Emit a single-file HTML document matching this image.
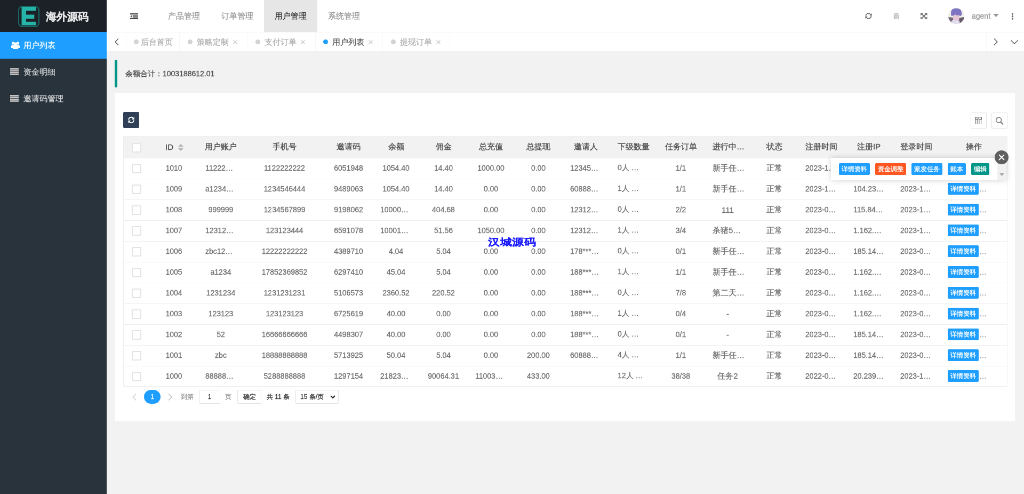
<!DOCTYPE html>
<html><head><meta charset="utf-8">
<style>
html,body{margin:0;padding:0;width:1024px;height:494px;overflow:hidden;background:#f2f2f2}
*{box-sizing:border-box}
#s{position:absolute;left:0;top:0;width:1920px;height:926px;transform:scale(0.533333);will-change:transform;transform-origin:0 0;font-family:"Liberation Sans",sans-serif;font-size:14px;color:#666;background:#f2f2f2;overflow:hidden;-webkit-text-stroke-width:0.3px}
.a{position:absolute}
/* side */
#side{left:0;top:0;width:200px;height:926px;background:#29333c}
#logo{left:0;top:0;width:200px;height:60px;background:#1c2128}
#logoic{left:34px;top:10.7px;width:40px;height:40px;border:2px solid #176a63;border-radius:8px;background:#1c2128}
#logotx{left:86px;top:17px;font-size:20px;font-weight:bold;color:#e6e6e6;line-height:28px;white-space:nowrap}
.mi{left:0;width:200px;height:50px;line-height:50px;font-size:15px;color:rgba(255,255,255,.7);white-space:nowrap}
.mi span{position:absolute;left:44px;top:0}
.mi.on{background:#1e9fff;color:#fff}
/* header */
#hdr{left:200px;top:0;width:1720px;height:60px;background:#fff}
.nv{top:0;height:60px;line-height:60px;font-size:15px;color:#999;white-space:nowrap;text-align:center;width:100px}
.nv.on{background:#e6e6e6;color:#333}
#tabs{left:200px;top:60px;width:1720px;height:36px;background:#fff;border-top:1px solid #f6f6f6}
.dv{top:0;width:1px;height:35px;background:#f6f6f6}
.tb{top:0;height:35px;line-height:35px;font-size:15px;white-space:nowrap;color:#b0b0b0}
.dot{position:absolute;top:13px;width:9px;height:9px;border-radius:50%;background:#d2d2d2}
.x{position:absolute;top:0;color:#c8c8c8;font-size:13px;-webkit-text-stroke-width:0}
/* body */
#quote{left:215px;top:112px;width:5px;height:52px;background:#009688;border-radius:3px}
#qtx{left:235px;top:127px;color:#4a4a4a;line-height:22px;white-space:nowrap}
#card{left:215px;top:174px;width:1688px;height:616px;background:#fff;border-radius:2px}
.ib{width:30px;height:30px;border:1px solid #e2e2e2;border-radius:2px;background:#fff}
#tbl{left:231px;top:254.5px;width:1658px;height:470px;border:1px solid #eee;background:#fff}
.thead{position:absolute;left:0;top:0;width:100%;height:40px;background:#f2f2f2}
.tr{position:absolute;left:0;width:100%;height:39px;border-top:1px solid #eee}
.c{position:absolute;padding:0 15px;display:flex;align-items:center;justify-content:center;white-space:nowrap;overflow:hidden}
.c span{display:block;white-space:nowrap}
.td .c{color:#707070}
.th .c{font-size:15px;color:#505050;-webkit-text-stroke-width:0.4px}
.cb{position:absolute;width:18px;height:18px;border:2px solid #e4e4e4;border-radius:2px;background:#fff}
.sort{display:inline-block;position:relative;width:10px;height:14px;margin-left:9px;vertical-align:middle}
.sort:before{content:"";position:absolute;left:0;top:0;border:5px solid transparent;border-bottom:5px solid #b2b2b2;border-top:0}
.sort:after{content:"";position:absolute;left:0;top:8px;border:5px solid transparent;border-top:5px solid #b2b2b2;border-bottom:0}
.op{justify-content:flex-start}
.el{display:inline-block;line-height:22px;color:#999;margin-left:1px}
.bx{display:inline-block;height:22px;line-height:22px;padding:0 5px;font-size:12px;color:#fff;background:#1e9fff;border-radius:2px}
/* pager */
.pg{top:731px;height:26px;line-height:26px;white-space:nowrap;font-size:12px;color:#999}
</style></head><body>
<div id="s">
 <div class="a" id="side">
  <div class="a" id="logo"></div>
  <div class="a" id="logoic"><svg width="40" height="40" viewBox="0 0 40 40" style="position:absolute;left:-2px;top:-2px"><path d="M6.5 2 H33.5 V9 H15 V16.5 H30.3 V24 H15 V29.7 H33.5 V36.6 H6.5 Z" fill="#24b4a8"/></svg></div>
  <div class="a" id="logotx">海外源码</div>
  <div class="a mi on" style="top:60px"><svg class="a" style="left:20.5px;top:18.4px" width="16" height="14" viewBox="0 0 16 14"><circle cx="3.6" cy="3" r="2.7" fill="#fff"/><circle cx="12.4" cy="3" r="2.7" fill="#fff"/><circle cx="8" cy="4.6" r="3" fill="#fff"/><path d="M0 12 V8.5 Q0 6.2 2.5 6.2 H13.5 Q16 6.2 16 8.5 V12 H13 V14 H3 V12Z" fill="#fff"/></svg><span>用户列表</span></div>
  <div class="a mi" style="top:110px"><svg class="a" style="left:19px;top:18.4px" width="16" height="13" viewBox="0 0 16 13"><rect x="0" y="0" width="16" height="2.6" fill="#c4c4c4"/><rect x="0" y="3.4" width="16" height="2.6" fill="#c4c4c4"/><rect x="0" y="6.8" width="16" height="2.6" fill="#c4c4c4"/><rect x="0" y="10.2" width="16" height="2.6" fill="#c4c4c4"/></svg><span>资金明细</span></div>
  <div class="a mi" style="top:160px"><svg class="a" style="left:19px;top:18.4px" width="16" height="13" viewBox="0 0 16 13"><rect x="0" y="0" width="16" height="2.6" fill="#c4c4c4"/><rect x="0" y="3.4" width="16" height="2.6" fill="#c4c4c4"/><rect x="0" y="6.8" width="16" height="2.6" fill="#c4c4c4"/><rect x="0" y="10.2" width="16" height="2.6" fill="#c4c4c4"/></svg><span>邀请码管理</span></div>
 </div>

 <div class="a" id="hdr">
  <svg class="a" style="left:43.5px;top:24.5px" width="15" height="11" viewBox="0 0 15 11"><rect x="0" y="0" width="15" height="2.2" fill="#444"/><rect x="0" y="8.8" width="15" height="2.2" fill="#444"/><rect x="4.8" y="3.2" width="10.2" height="1.4" fill="#555"/><rect x="4.8" y="4.9" width="10.2" height="1.2" fill="#777"/><rect x="4.8" y="6.4" width="10.2" height="1.4" fill="#555"/><path d="M0.3 5.5 L3.3 3.3 V7.7Z" fill="#555"/></svg>
  <div class="a nv" style="left:95px">产品管理</div>
  <div class="a nv" style="left:195px">订单管理</div>
  <div class="a nv on" style="left:295px">用户管理</div>
  <div class="a nv" style="left:395px">系统管理</div>
  <!-- right icons -->
  <svg class="a" style="left:1421.5px;top:23.8px" width="13" height="12" viewBox="0 0 13 12"><path d="M1.3 6.3 C1.6 3.3 3.8 1.3 6.6 1.3 C8.2 1.3 9.6 2 10.6 3.2" stroke="#666" stroke-width="1.6" fill="none"/><path d="M12.6 1 V5.3 H8.3Z" fill="#666"/><path d="M11.7 5.7 C11.4 8.7 9.2 10.7 6.4 10.7 C4.8 10.7 3.4 10 2.4 8.8" stroke="#666" stroke-width="1.6" fill="none"/><path d="M0.4 11 V6.7 H4.7Z" fill="#666"/></svg>
  <svg class="a" style="left:1474.5px;top:23.8px" width="11" height="12.5" viewBox="0 0 11 12.5"><path d="M0.3 3.2 Q0.8 0.3 5.5 0.3 Q10.2 0.3 10.7 3.2Z" fill="#c2c2c2"/><rect x="0.8" y="3.8" width="9.4" height="8.7" rx="1" fill="#c2c2c2"/><path d="M3.4 5 V11.5 M5.5 5 V11.5 M7.6 5 V11.5" stroke="#e6e6e6" stroke-width="0.8"/></svg>
  <svg class="a" style="left:1526px;top:23.8px" width="12.5" height="12.5" viewBox="0 0 12.5 12.5"><path d="M2 2 L10.5 10.5 M10.5 2 L2 10.5" stroke="#777" stroke-width="2"/><path d="M0 0 H5.5 L0 5.5Z M12.5 0 V5.5 L7 0Z M0 12.5 V7 L5.5 12.5Z M12.5 12.5 H7 L12.5 7Z" fill="#777"/></svg>
  <div class="a" style="left:1578px;top:15px;width:30px;height:30px;border-radius:50%;overflow:hidden;background:#e9dfe6">
   <svg width="30" height="30" viewBox="0 0 30 30"><rect width="30" height="30" fill="#eef0ea"/><path d="M0 17 L10 18 L12 26 L4 30 L0 30Z" fill="#75697a"/><path d="M17 19 L30 17 L30 30 L20 30Z" fill="#685d6a"/><path d="M6 24 Q13 20 21 24 L22 30 L6 30Z" fill="#e2dcf0"/><path d="M9 13 Q14 11 21 13 L20.5 22 Q15 25 9 22Z" fill="#e6c6d4"/><path d="M5 11 Q4.5 0.5 15 0.6 Q25.5 0.5 25.4 11 Q25 15 22 15 Q19 12 16 14 L13 12 Q10 15 6.5 15 Q5 14 5 11Z" fill="#7d74c2"/></svg>
  </div>
  <div class="a" style="left:1622px;top:19px;line-height:22px;color:#999;font-size:14px">agent</div>
  <svg class="a" style="left:1662px;top:26px" width="11" height="6" viewBox="0 0 11 6"><path d="M0 0 H11 L5.5 6Z" fill="#999"/></svg>
  <svg class="a" style="left:1696px;top:23.5px" width="5" height="13" viewBox="0 0 5 13"><circle cx="2.5" cy="2" r="1.7" fill="#666"/><circle cx="2.5" cy="6.5" r="1.7" fill="#666"/><circle cx="2.5" cy="11" r="1.7" fill="#666"/></svg>
 </div>

 <div class="a" id="tabs">
  <svg class="a" style="left:15px;top:11px" width="8" height="13" viewBox="0 0 8 13"><path d="M7 0.5 L1 6.5 L7 12.5" stroke="#555" stroke-width="1.4" fill="none"/></svg>
  <div class="a dv" style="left:36px"></div>
  <div class="a tb" style="left:36px;width:100px"><i class="dot" style="left:15px"></i><span class="a" style="left:28px">后台首页</span></div>
  <div class="a dv" style="left:136px"></div>
  <div class="a tb" style="left:137px;width:126px"><i class="dot" style="left:15px"></i><span class="a" style="left:32px">策略定制</span><svg class="a" style="left:100px;top:14px" width="8" height="8" viewBox="0 0 8 8"><path d="M0.5 0.5 L7.5 7.5 M7.5 0.5 L0.5 7.5" stroke="#c4c4c4" stroke-width="1.2"/></svg></div>
  <div class="a dv" style="left:263px"></div>
  <div class="a tb" style="left:264px;width:127px"><i class="dot" style="left:15px"></i><span class="a" style="left:32px">支付订单</span><svg class="a" style="left:100px;top:14px" width="8" height="8" viewBox="0 0 8 8"><path d="M0.5 0.5 L7.5 7.5 M7.5 0.5 L0.5 7.5" stroke="#c4c4c4" stroke-width="1.2"/></svg></div>
  <div class="a dv" style="left:391px"></div>
  <div class="a tb" style="left:392px;width:125px;color:#5a5a5a"><i class="dot" style="left:14px;background:#1e9fff"></i><span class="a" style="left:31px">用户列表</span><svg class="a" style="left:99px;top:14px" width="8" height="8" viewBox="0 0 8 8"><path d="M0.5 0.5 L7.5 7.5 M7.5 0.5 L0.5 7.5" stroke="#c4c4c4" stroke-width="1.2"/></svg></div>
  <div class="a dv" style="left:517px"></div>
  <div class="a tb" style="left:518px;width:125px"><i class="dot" style="left:15px"></i><span class="a" style="left:32px">提现订单</span><svg class="a" style="left:100px;top:14px" width="8" height="8" viewBox="0 0 8 8"><path d="M0.5 0.5 L7.5 7.5 M7.5 0.5 L0.5 7.5" stroke="#c4c4c4" stroke-width="1.2"/></svg></div>
  <div class="a dv" style="left:643px"></div>
  <div class="a dv" style="left:1649px"></div>
  <svg class="a" style="left:1663px;top:11px" width="8" height="13" viewBox="0 0 8 13"><path d="M1 0.5 L7 6.5 L1 12.5" stroke="#555" stroke-width="1.4" fill="none"/></svg>
  <div class="a dv" style="left:1684px"></div>
  <svg class="a" style="left:1695px;top:14px" width="14" height="8" viewBox="0 0 14 8"><path d="M0.5 0.5 L7 7 L13.5 0.5" stroke="#555" stroke-width="1.4" fill="none"/></svg>
 </div>

 <div class="a" id="quote"></div>
 <div class="a" id="qtx">余额合计：1003188612.01</div>

 <div class="a" id="card"></div>
 <div class="a" style="left:231px;top:210px;width:30px;height:30px;background:#2f4056;border-radius:2px"><svg class="a" style="left:8px;top:8px" width="14" height="14" viewBox="0 0 16 14"><path d="M2.5 6.5 A5.5 5.5 0 0 1 12.5 3.5" stroke="#fff" stroke-width="2.2" fill="none"/><path d="M14.5 0.5 V6 H9Z" fill="#fff"/><path d="M13.5 7.5 A5.5 5.5 0 0 1 3.5 10.5" stroke="#fff" stroke-width="2.2" fill="none"/><path d="M1.5 13.5 V8 H7Z" fill="#fff"/></svg></div>
 <div class="a ib" style="left:1820px;top:210.5px"><svg class="a" style="left:7px;top:7.5px" width="13" height="13" viewBox="0 0 13 13"><rect x="0.7" y="0.7" width="4.9" height="4.6" rx="0.6" stroke="#666" stroke-width="1.3" fill="none"/><rect x="7.4" y="0.7" width="4.9" height="4.6" rx="0.6" stroke="#666" stroke-width="1.3" fill="none"/><path d="M2.2 1.8 L3.1 3.5 L4 1.8Z M8.9 1.8 L9.8 3.5 L10.7 1.8Z" fill="#888"/><path d="M1.2 6 V13 M4.3 6 V13 M7.9 6 V13 M11.6 6 V13" stroke="#777" stroke-width="1.2"/></svg></div>
 <div class="a ib" style="left:1859px;top:210.5px"><svg class="a" style="left:5px;top:5px" width="20" height="20" viewBox="0 0 20 20"><circle cx="7.6" cy="8" r="5" stroke="#777" stroke-width="1.5" fill="none"/><path d="M3 8 A4.6 4.6 0 0 1 6 3.6" stroke="#999" stroke-width="2.2" fill="none"/><path d="M11.4 11.8 L15.2 15.6" stroke="#777" stroke-width="2.2" stroke-linecap="round"/></svg></div>

 <div class="a" id="tbl"><div class="thead"></div><div class="cb" style="left:15px;top:12px"></div><div class="th"><div class="c" style="left:50px;top:0px;width:88px;height:40px"><span><b style="font-weight:normal;position:relative;left:1px">ID<i class="sort"></i></b></span></div><div class="c" style="left:138px;top:0px;width:88px;height:40px"><span>用户账户</span></div><div class="c" style="left:226px;top:0px;width:151px;height:40px"><span>手机号</span></div><div class="c" style="left:377px;top:0px;width:89px;height:40px"><span>邀请码</span></div><div class="c" style="left:466px;top:0px;width:89px;height:40px"><span>余额</span></div><div class="c" style="left:555px;top:0px;width:89px;height:40px"><span>佣金</span></div><div class="c" style="left:644px;top:0px;width:89px;height:40px"><span>总充值</span></div><div class="c" style="left:733px;top:0px;width:89px;height:40px"><span>总提现</span></div><div class="c" style="left:822px;top:0px;width:89px;height:40px"><span>邀请人</span></div><div class="c" style="left:911px;top:0px;width:89px;height:40px"><span>下级数量</span></div><div class="c" style="left:1000px;top:0px;width:89px;height:40px"><span>任务订单</span></div><div class="c" style="left:1089px;top:0px;width:87px;height:40px;justify-content:flex-start"><span>进行中…</span></div><div class="c" style="left:1176px;top:0px;width:87px;height:40px"><span>状态</span></div><div class="c" style="left:1263px;top:0px;width:90px;height:40px"><span>注册时间</span></div><div class="c" style="left:1353px;top:0px;width:88px;height:40px"><span>注册IP</span></div><div class="c" style="left:1441px;top:0px;width:89px;height:40px"><span>登录时间</span></div><div class="c" style="left:1530px;top:0px;width:128px;height:40px"><span>操作</span></div></div><div class="tr" style="top:40px"></div><div class="cb" style="left:15px;top:51px"></div><div class="td"><div class="c" style="left:50px;top:40px;width:88px;height:39px"><span>1010</span></div><div class="c" style="left:138px;top:40px;width:88px;height:39px;justify-content:flex-start"><span>11222…</span></div><div class="c" style="left:226px;top:40px;width:151px;height:39px"><span>1122222222</span></div><div class="c" style="left:377px;top:40px;width:89px;height:39px"><span>6051948</span></div><div class="c" style="left:466px;top:40px;width:89px;height:39px"><span>1054.40</span></div><div class="c" style="left:555px;top:40px;width:89px;height:39px"><span>14.40</span></div><div class="c" style="left:644px;top:40px;width:89px;height:39px"><span>1000.00</span></div><div class="c" style="left:733px;top:40px;width:89px;height:39px"><span>0.00</span></div><div class="c" style="left:822px;top:40px;width:89px;height:39px;justify-content:flex-start"><span>12345…</span></div><div class="c" style="left:911px;top:40px;width:89px;height:39px;justify-content:flex-start"><span>0人 …</span></div><div class="c" style="left:1000px;top:40px;width:89px;height:39px"><span>1/1</span></div><div class="c" style="left:1089px;top:40px;width:87px;height:39px;justify-content:flex-start;font-size:15px"><span>新手任…</span></div><div class="c" style="left:1176px;top:40px;width:87px;height:39px;font-size:15px"><span>正常</span></div><div class="c" style="left:1263px;top:40px;width:90px;height:39px;justify-content:flex-start"><span>2023-1…</span></div><div class="c" style="left:1353px;top:40px;width:88px;height:39px"><span></span></div><div class="c" style="left:1441px;top:40px;width:89px;height:39px"><span></span></div></div><div class="tr" style="top:79px"></div><div class="cb" style="left:15px;top:90px"></div><div class="td"><div class="c" style="left:50px;top:79px;width:88px;height:39px"><span>1009</span></div><div class="c" style="left:138px;top:79px;width:88px;height:39px;justify-content:flex-start"><span>a1234…</span></div><div class="c" style="left:226px;top:79px;width:151px;height:39px"><span>1234546444</span></div><div class="c" style="left:377px;top:79px;width:89px;height:39px"><span>9489063</span></div><div class="c" style="left:466px;top:79px;width:89px;height:39px"><span>1054.40</span></div><div class="c" style="left:555px;top:79px;width:89px;height:39px"><span>14.40</span></div><div class="c" style="left:644px;top:79px;width:89px;height:39px"><span>0.00</span></div><div class="c" style="left:733px;top:79px;width:89px;height:39px"><span>0.00</span></div><div class="c" style="left:822px;top:79px;width:89px;height:39px;justify-content:flex-start"><span>60888…</span></div><div class="c" style="left:911px;top:79px;width:89px;height:39px;justify-content:flex-start"><span>1人 …</span></div><div class="c" style="left:1000px;top:79px;width:89px;height:39px"><span>1/1</span></div><div class="c" style="left:1089px;top:79px;width:87px;height:39px;justify-content:flex-start;font-size:15px"><span>新手任…</span></div><div class="c" style="left:1176px;top:79px;width:87px;height:39px;font-size:15px"><span>正常</span></div><div class="c" style="left:1263px;top:79px;width:90px;height:39px;justify-content:flex-start"><span>2023-1…</span></div><div class="c" style="left:1353px;top:79px;width:88px;height:39px;justify-content:flex-start"><span>104.23…</span></div><div class="c" style="left:1441px;top:79px;width:89px;height:39px;justify-content:flex-start"><span>2023-1…</span></div><div class="c op" style="left:1530px;top:79px;width:128px;height:39px"><span class="bx">详情资料</span><span class="el">…</span></div></div><div class="tr" style="top:118px"></div><div class="cb" style="left:15px;top:129px"></div><div class="td"><div class="c" style="left:50px;top:118px;width:88px;height:39px"><span>1008</span></div><div class="c" style="left:138px;top:118px;width:88px;height:39px"><span>999999</span></div><div class="c" style="left:226px;top:118px;width:151px;height:39px"><span>1234567899</span></div><div class="c" style="left:377px;top:118px;width:89px;height:39px"><span>9198062</span></div><div class="c" style="left:466px;top:118px;width:89px;height:39px;justify-content:flex-start"><span>10000…</span></div><div class="c" style="left:555px;top:118px;width:89px;height:39px"><span>404.68</span></div><div class="c" style="left:644px;top:118px;width:89px;height:39px"><span>0.00</span></div><div class="c" style="left:733px;top:118px;width:89px;height:39px"><span>0.00</span></div><div class="c" style="left:822px;top:118px;width:89px;height:39px;justify-content:flex-start"><span>12312…</span></div><div class="c" style="left:911px;top:118px;width:89px;height:39px;justify-content:flex-start"><span>0人 …</span></div><div class="c" style="left:1000px;top:118px;width:89px;height:39px"><span>2/2</span></div><div class="c" style="left:1089px;top:118px;width:87px;height:39px;font-size:15px"><span>111</span></div><div class="c" style="left:1176px;top:118px;width:87px;height:39px;font-size:15px"><span>正常</span></div><div class="c" style="left:1263px;top:118px;width:90px;height:39px;justify-content:flex-start"><span>2023-0…</span></div><div class="c" style="left:1353px;top:118px;width:88px;height:39px;justify-content:flex-start"><span>115.84…</span></div><div class="c" style="left:1441px;top:118px;width:89px;height:39px;justify-content:flex-start"><span>2023-1…</span></div><div class="c op" style="left:1530px;top:118px;width:128px;height:39px"><span class="bx">详情资料</span><span class="el">…</span></div></div><div class="tr" style="top:157px"></div><div class="cb" style="left:15px;top:168px"></div><div class="td"><div class="c" style="left:50px;top:157px;width:88px;height:39px"><span>1007</span></div><div class="c" style="left:138px;top:157px;width:88px;height:39px;justify-content:flex-start"><span>12312…</span></div><div class="c" style="left:226px;top:157px;width:151px;height:39px"><span>123123444</span></div><div class="c" style="left:377px;top:157px;width:89px;height:39px"><span>6591078</span></div><div class="c" style="left:466px;top:157px;width:89px;height:39px;justify-content:flex-start"><span>10001…</span></div><div class="c" style="left:555px;top:157px;width:89px;height:39px"><span>51.56</span></div><div class="c" style="left:644px;top:157px;width:89px;height:39px"><span>1050.00</span></div><div class="c" style="left:733px;top:157px;width:89px;height:39px"><span>0.00</span></div><div class="c" style="left:822px;top:157px;width:89px;height:39px;justify-content:flex-start"><span>12312…</span></div><div class="c" style="left:911px;top:157px;width:89px;height:39px;justify-content:flex-start"><span>1人 …</span></div><div class="c" style="left:1000px;top:157px;width:89px;height:39px"><span>3/4</span></div><div class="c" style="left:1089px;top:157px;width:87px;height:39px;justify-content:flex-start;font-size:15px"><span>杀猪5…</span></div><div class="c" style="left:1176px;top:157px;width:87px;height:39px;font-size:15px"><span>正常</span></div><div class="c" style="left:1263px;top:157px;width:90px;height:39px;justify-content:flex-start"><span>2023-0…</span></div><div class="c" style="left:1353px;top:157px;width:88px;height:39px;justify-content:flex-start"><span>1.162.…</span></div><div class="c" style="left:1441px;top:157px;width:89px;height:39px;justify-content:flex-start"><span>2023-1…</span></div><div class="c op" style="left:1530px;top:157px;width:128px;height:39px"><span class="bx">详情资料</span><span class="el">…</span></div></div><div class="tr" style="top:196px"></div><div class="cb" style="left:15px;top:207px"></div><div class="td"><div class="c" style="left:50px;top:196px;width:88px;height:39px"><span>1006</span></div><div class="c" style="left:138px;top:196px;width:88px;height:39px;justify-content:flex-start"><span>zbc12…</span></div><div class="c" style="left:226px;top:196px;width:151px;height:39px"><span>12222222222</span></div><div class="c" style="left:377px;top:196px;width:89px;height:39px"><span>4389710</span></div><div class="c" style="left:466px;top:196px;width:89px;height:39px"><span>4.04</span></div><div class="c" style="left:555px;top:196px;width:89px;height:39px"><span>5.04</span></div><div class="c" style="left:644px;top:196px;width:89px;height:39px"><span>0.00</span></div><div class="c" style="left:733px;top:196px;width:89px;height:39px"><span>0.00</span></div><div class="c" style="left:822px;top:196px;width:89px;height:39px;justify-content:flex-start"><span>178***…</span></div><div class="c" style="left:911px;top:196px;width:89px;height:39px;justify-content:flex-start"><span>0人 …</span></div><div class="c" style="left:1000px;top:196px;width:89px;height:39px"><span>0/1</span></div><div class="c" style="left:1089px;top:196px;width:87px;height:39px;justify-content:flex-start;font-size:15px"><span>新手任…</span></div><div class="c" style="left:1176px;top:196px;width:87px;height:39px;font-size:15px"><span>正常</span></div><div class="c" style="left:1263px;top:196px;width:90px;height:39px;justify-content:flex-start"><span>2023-0…</span></div><div class="c" style="left:1353px;top:196px;width:88px;height:39px;justify-content:flex-start"><span>185.14…</span></div><div class="c" style="left:1441px;top:196px;width:89px;height:39px;justify-content:flex-start"><span>2023-0…</span></div><div class="c op" style="left:1530px;top:196px;width:128px;height:39px"><span class="bx">详情资料</span><span class="el">…</span></div></div><div class="tr" style="top:235px"></div><div class="cb" style="left:15px;top:246px"></div><div class="td"><div class="c" style="left:50px;top:235px;width:88px;height:39px"><span>1005</span></div><div class="c" style="left:138px;top:235px;width:88px;height:39px"><span>a1234</span></div><div class="c" style="left:226px;top:235px;width:151px;height:39px"><span>17852369852</span></div><div class="c" style="left:377px;top:235px;width:89px;height:39px"><span>6297410</span></div><div class="c" style="left:466px;top:235px;width:89px;height:39px"><span>45.04</span></div><div class="c" style="left:555px;top:235px;width:89px;height:39px"><span>5.04</span></div><div class="c" style="left:644px;top:235px;width:89px;height:39px"><span>0.00</span></div><div class="c" style="left:733px;top:235px;width:89px;height:39px"><span>0.00</span></div><div class="c" style="left:822px;top:235px;width:89px;height:39px;justify-content:flex-start"><span>188***…</span></div><div class="c" style="left:911px;top:235px;width:89px;height:39px;justify-content:flex-start"><span>1人 …</span></div><div class="c" style="left:1000px;top:235px;width:89px;height:39px"><span>1/1</span></div><div class="c" style="left:1089px;top:235px;width:87px;height:39px;justify-content:flex-start;font-size:15px"><span>新手任…</span></div><div class="c" style="left:1176px;top:235px;width:87px;height:39px;font-size:15px"><span>正常</span></div><div class="c" style="left:1263px;top:235px;width:90px;height:39px;justify-content:flex-start"><span>2023-0…</span></div><div class="c" style="left:1353px;top:235px;width:88px;height:39px;justify-content:flex-start"><span>1.162.…</span></div><div class="c" style="left:1441px;top:235px;width:89px;height:39px;justify-content:flex-start"><span>2023-0…</span></div><div class="c op" style="left:1530px;top:235px;width:128px;height:39px"><span class="bx">详情资料</span><span class="el">…</span></div></div><div class="tr" style="top:274px"></div><div class="cb" style="left:15px;top:285px"></div><div class="td"><div class="c" style="left:50px;top:274px;width:88px;height:39px"><span>1004</span></div><div class="c" style="left:138px;top:274px;width:88px;height:39px"><span>1231234</span></div><div class="c" style="left:226px;top:274px;width:151px;height:39px"><span>1231231231</span></div><div class="c" style="left:377px;top:274px;width:89px;height:39px"><span>5106573</span></div><div class="c" style="left:466px;top:274px;width:89px;height:39px"><span>2360.52</span></div><div class="c" style="left:555px;top:274px;width:89px;height:39px"><span>220.52</span></div><div class="c" style="left:644px;top:274px;width:89px;height:39px"><span>0.00</span></div><div class="c" style="left:733px;top:274px;width:89px;height:39px"><span>0.00</span></div><div class="c" style="left:822px;top:274px;width:89px;height:39px;justify-content:flex-start"><span>188***…</span></div><div class="c" style="left:911px;top:274px;width:89px;height:39px;justify-content:flex-start"><span>0人 …</span></div><div class="c" style="left:1000px;top:274px;width:89px;height:39px"><span>7/8</span></div><div class="c" style="left:1089px;top:274px;width:87px;height:39px;justify-content:flex-start;font-size:15px"><span>第二天…</span></div><div class="c" style="left:1176px;top:274px;width:87px;height:39px;font-size:15px"><span>正常</span></div><div class="c" style="left:1263px;top:274px;width:90px;height:39px;justify-content:flex-start"><span>2023-0…</span></div><div class="c" style="left:1353px;top:274px;width:88px;height:39px;justify-content:flex-start"><span>1.162.…</span></div><div class="c" style="left:1441px;top:274px;width:89px;height:39px;justify-content:flex-start"><span>2023-0…</span></div><div class="c op" style="left:1530px;top:274px;width:128px;height:39px"><span class="bx">详情资料</span><span class="el">…</span></div></div><div class="tr" style="top:313px"></div><div class="cb" style="left:15px;top:324px"></div><div class="td"><div class="c" style="left:50px;top:313px;width:88px;height:39px"><span>1003</span></div><div class="c" style="left:138px;top:313px;width:88px;height:39px"><span>123123</span></div><div class="c" style="left:226px;top:313px;width:151px;height:39px"><span>123123123</span></div><div class="c" style="left:377px;top:313px;width:89px;height:39px"><span>6725619</span></div><div class="c" style="left:466px;top:313px;width:89px;height:39px"><span>40.00</span></div><div class="c" style="left:555px;top:313px;width:89px;height:39px"><span>0.00</span></div><div class="c" style="left:644px;top:313px;width:89px;height:39px"><span>0.00</span></div><div class="c" style="left:733px;top:313px;width:89px;height:39px"><span>0.00</span></div><div class="c" style="left:822px;top:313px;width:89px;height:39px;justify-content:flex-start"><span>188***…</span></div><div class="c" style="left:911px;top:313px;width:89px;height:39px;justify-content:flex-start"><span>1人 …</span></div><div class="c" style="left:1000px;top:313px;width:89px;height:39px"><span>0/4</span></div><div class="c" style="left:1089px;top:313px;width:87px;height:39px;font-size:15px"><span>-</span></div><div class="c" style="left:1176px;top:313px;width:87px;height:39px;font-size:15px"><span>正常</span></div><div class="c" style="left:1263px;top:313px;width:90px;height:39px;justify-content:flex-start"><span>2023-0…</span></div><div class="c" style="left:1353px;top:313px;width:88px;height:39px;justify-content:flex-start"><span>1.162.…</span></div><div class="c" style="left:1441px;top:313px;width:89px;height:39px;justify-content:flex-start"><span>2023-0…</span></div><div class="c op" style="left:1530px;top:313px;width:128px;height:39px"><span class="bx">详情资料</span><span class="el">…</span></div></div><div class="tr" style="top:352px"></div><div class="cb" style="left:15px;top:363px"></div><div class="td"><div class="c" style="left:50px;top:352px;width:88px;height:39px"><span>1002</span></div><div class="c" style="left:138px;top:352px;width:88px;height:39px"><span>52</span></div><div class="c" style="left:226px;top:352px;width:151px;height:39px"><span>16666666666</span></div><div class="c" style="left:377px;top:352px;width:89px;height:39px"><span>4498307</span></div><div class="c" style="left:466px;top:352px;width:89px;height:39px"><span>40.00</span></div><div class="c" style="left:555px;top:352px;width:89px;height:39px"><span>0.00</span></div><div class="c" style="left:644px;top:352px;width:89px;height:39px"><span>0.00</span></div><div class="c" style="left:733px;top:352px;width:89px;height:39px"><span>0.00</span></div><div class="c" style="left:822px;top:352px;width:89px;height:39px;justify-content:flex-start"><span>188***…</span></div><div class="c" style="left:911px;top:352px;width:89px;height:39px;justify-content:flex-start"><span>0人 …</span></div><div class="c" style="left:1000px;top:352px;width:89px;height:39px"><span>0/1</span></div><div class="c" style="left:1089px;top:352px;width:87px;height:39px;font-size:15px"><span>-</span></div><div class="c" style="left:1176px;top:352px;width:87px;height:39px;font-size:15px"><span>正常</span></div><div class="c" style="left:1263px;top:352px;width:90px;height:39px;justify-content:flex-start"><span>2023-0…</span></div><div class="c" style="left:1353px;top:352px;width:88px;height:39px;justify-content:flex-start"><span>185.14…</span></div><div class="c" style="left:1441px;top:352px;width:89px;height:39px;justify-content:flex-start"><span>2023-0…</span></div><div class="c op" style="left:1530px;top:352px;width:128px;height:39px"><span class="bx">详情资料</span><span class="el">…</span></div></div><div class="tr" style="top:391px"></div><div class="cb" style="left:15px;top:402px"></div><div class="td"><div class="c" style="left:50px;top:391px;width:88px;height:39px"><span>1001</span></div><div class="c" style="left:138px;top:391px;width:88px;height:39px"><span>zbc</span></div><div class="c" style="left:226px;top:391px;width:151px;height:39px"><span>18888888888</span></div><div class="c" style="left:377px;top:391px;width:89px;height:39px"><span>5713925</span></div><div class="c" style="left:466px;top:391px;width:89px;height:39px"><span>50.04</span></div><div class="c" style="left:555px;top:391px;width:89px;height:39px"><span>5.04</span></div><div class="c" style="left:644px;top:391px;width:89px;height:39px"><span>0.00</span></div><div class="c" style="left:733px;top:391px;width:89px;height:39px"><span>200.00</span></div><div class="c" style="left:822px;top:391px;width:89px;height:39px;justify-content:flex-start"><span>60888…</span></div><div class="c" style="left:911px;top:391px;width:89px;height:39px;justify-content:flex-start"><span>4人 …</span></div><div class="c" style="left:1000px;top:391px;width:89px;height:39px"><span>1/1</span></div><div class="c" style="left:1089px;top:391px;width:87px;height:39px;justify-content:flex-start;font-size:15px"><span>新手任…</span></div><div class="c" style="left:1176px;top:391px;width:87px;height:39px;font-size:15px"><span>正常</span></div><div class="c" style="left:1263px;top:391px;width:90px;height:39px;justify-content:flex-start"><span>2023-0…</span></div><div class="c" style="left:1353px;top:391px;width:88px;height:39px;justify-content:flex-start"><span>185.14…</span></div><div class="c" style="left:1441px;top:391px;width:89px;height:39px;justify-content:flex-start"><span>2023-0…</span></div><div class="c op" style="left:1530px;top:391px;width:128px;height:39px"><span class="bx">详情资料</span><span class="el">…</span></div></div><div class="tr" style="top:430px"></div><div class="cb" style="left:15px;top:441px"></div><div class="td"><div class="c" style="left:50px;top:430px;width:88px;height:39px"><span>1000</span></div><div class="c" style="left:138px;top:430px;width:88px;height:39px;justify-content:flex-start"><span>88888…</span></div><div class="c" style="left:226px;top:430px;width:151px;height:39px"><span>5288888888</span></div><div class="c" style="left:377px;top:430px;width:89px;height:39px"><span>1297154</span></div><div class="c" style="left:466px;top:430px;width:89px;height:39px;justify-content:flex-start"><span>21823…</span></div><div class="c" style="left:555px;top:430px;width:89px;height:39px"><span>90064.31</span></div><div class="c" style="left:644px;top:430px;width:89px;height:39px;justify-content:flex-start"><span>11003…</span></div><div class="c" style="left:733px;top:430px;width:89px;height:39px"><span>433.00</span></div><div class="c" style="left:822px;top:430px;width:89px;height:39px"><span></span></div><div class="c" style="left:911px;top:430px;width:89px;height:39px;justify-content:flex-start"><span>12人 …</span></div><div class="c" style="left:1000px;top:430px;width:89px;height:39px"><span>38/38</span></div><div class="c" style="left:1089px;top:430px;width:87px;height:39px;font-size:15px"><span>任务2</span></div><div class="c" style="left:1176px;top:430px;width:87px;height:39px;font-size:15px"><span>正常</span></div><div class="c" style="left:1263px;top:430px;width:90px;height:39px;justify-content:flex-start"><span>2022-0…</span></div><div class="c" style="left:1353px;top:430px;width:88px;height:39px;justify-content:flex-start"><span>20.239…</span></div><div class="c" style="left:1441px;top:430px;width:89px;height:39px;justify-content:flex-start"><span>2023-1…</span></div><div class="c op" style="left:1530px;top:430px;width:128px;height:39px"><span class="bx">详情资料</span><span class="el">…</span></div></div></div>

 <!-- pager -->
 <svg class="a" style="left:248px;top:738px" width="8" height="13" viewBox="0 0 8 13"><path d="M7 0.5 L1 6.5 L7 12.5" stroke="#ccc" stroke-width="1.4" fill="none"/></svg>
 <div class="a" style="left:270px;top:731px;width:31px;height:26px;border-radius:13px;background:#1e9fff;color:#fff;font-size:12px;line-height:26px;text-align:center">1</div>
 <svg class="a" style="left:315px;top:738px" width="8" height="13" viewBox="0 0 8 13"><path d="M1 0.5 L7 6.5 L1 12.5" stroke="#bbb" stroke-width="1.4" fill="none"/></svg>
 <div class="a pg" style="left:339px">到第</div>
 <div class="a" style="left:373px;top:731px;width:40px;height:26px;border:1px solid #e2e2e2;border-radius:2px;text-align:center;line-height:24px;font-size:12px;color:#333">1</div>
 <div class="a pg" style="left:422px">页</div>
 <div class="a" style="left:445px;top:731px;width:45px;height:26px;border:1px solid #e2e2e2;border-radius:2px;text-align:center;line-height:24px;font-size:12px;color:#333">确定</div>
 <div class="a pg" style="left:500px;color:#333">共 11 条</div>
 <div class="a" style="left:554px;top:731px;width:81px;height:26px;border:1px solid #e2e2e2;border-radius:2px;line-height:24px;font-size:12px;color:#333;padding-left:8px">15 条/页<svg class="a" style="left:64px;top:9px" width="10" height="7" viewBox="0 0 10 7"><path d="M1 1 L5 5 L9 1" stroke="#222" stroke-width="2" fill="none"/></svg></div>

 <!-- tips popup -->
 <div class="a" style="left:1558px;top:296px;width:329px;height:41.5px;background:#fff;box-shadow:0 0 10px rgba(0,0,0,.18)">
  <div class="a" style="left:312px;top:0;width:17px;height:41.5px;background:#f1f1f1"></div>
  <svg class="a" style="left:316px;top:28.5px" width="9" height="5" viewBox="0 0 9 5"><path d="M0 0 H9 L4.5 5Z" fill="#a3a3a3"/></svg>
  <span class="a bx" style="left:15px;top:10px">详情资料</span>
  <span class="a bx" style="left:83px;top:10px;background:#ff5722">资金调整</span>
  <span class="a bx" style="left:151px;top:10px">派发任务</span>
  <span class="a bx" style="left:219px;top:10px">账本</span>
  <span class="a bx" style="left:263px;top:10px;background:#009688">编辑</span>
 </div>
 <div class="a" style="left:1865px;top:282px;width:26px;height:26px;border-radius:50%;background:#5f5f5f"><svg class="a" style="left:7px;top:7px" width="12" height="12" viewBox="0 0 12 12"><path d="M1 1 L11 11 M11 1 L1 11" stroke="#fff" stroke-width="1.8"/></svg></div>

 <!-- watermark -->
 <div class="a" style="left:915px;top:441px;font-size:22px;font-weight:bold;color:#1a1aff;line-height:26px;white-space:nowrap;transform:scaleY(0.82);transform-origin:0 50%;letter-spacing:0.5px">汉城源码</div>
</div>
</body></html>
